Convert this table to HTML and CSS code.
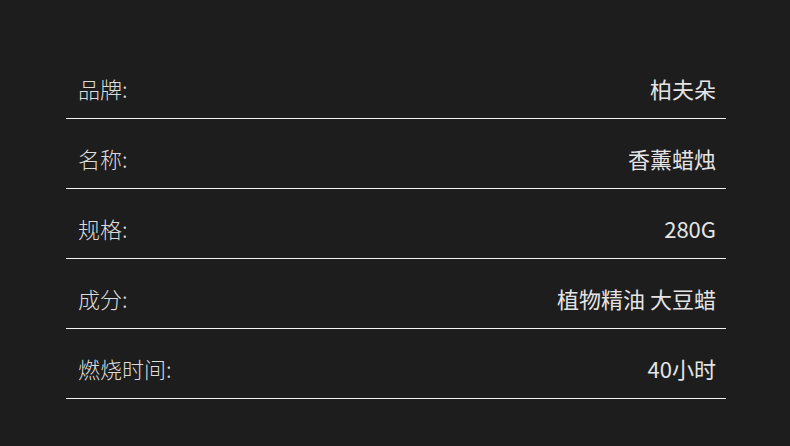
FILE: index.html
```html
<!DOCTYPE html>
<html lang="zh">
<head>
<meta charset="utf-8">
<link rel="stylesheet" href="styles.css">
</head>
<body>
<div class="table">
  <div class="row"><span class="label">品牌:</span><span class="value">柏夫朵</span></div>
  <div class="row"><span class="label">名称:</span><span class="value">香薰蜡烛</span></div>
  <div class="row"><span class="label">规格:</span><span class="value">280G</span></div>
  <div class="row"><span class="label">成分:</span><span class="value">植物精油 大豆蜡</span></div>
  <div class="row"><span class="label">燃烧时间:</span><span class="value">40小时</span></div>
</div>
</body>
</html>
```
FILE: styles.css
```css
html, body {
  margin: 0;
  padding: 0;
  background: #1d1d1d;
  width: 790px;
  height: 446px;
  overflow: hidden;
}
body {
  font-family: "Noto Sans CJK SC", "Noto Sans", sans-serif;
  color: #e4e4e4;
}
.table {
  margin: 49px 0 0 66px;
  width: 660px;
  display: flex;
  flex-direction: column;
}
.row {
  display: flex;
  justify-content: space-between;
  align-items: center;
  height: 30px;
  padding: 24px 10px 15px 12px;
  border-bottom: 1px solid #f4f4f4;
}
.label {
  font-size: 22px;
  font-weight: 300;
  line-height: 30px;
  color: #dcdcdc;
}
.value {
  font-size: 22px;
  font-weight: 400;
  line-height: 30px;
}
```
